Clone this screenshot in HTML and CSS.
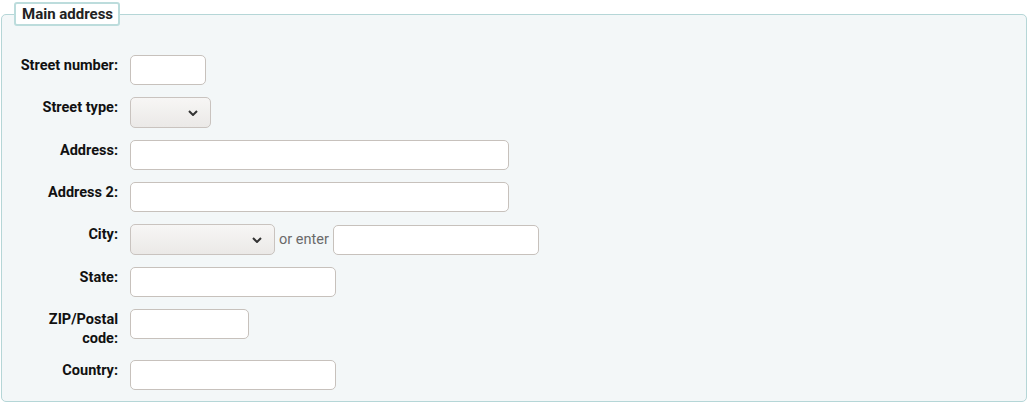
FILE: index.html
```html
<!DOCTYPE html>
<html lang="en">
<head>
<meta charset="utf-8">
<title>Main address</title>
<link rel="stylesheet" href="styles.css">
</head>
<body>
<fieldset class="panel">
  <legend class="panel-legend">Main address</legend>
  <ol class="form-list">
    <li class="form-row">
      <label class="form-label" for="streetnumber">Street number:</label>
      <input class="text-input w-xs" id="streetnumber" type="text">
    </li>
    <li class="form-row">
      <label class="form-label" for="streettype">Street type:</label>
      <span class="select-wrap w-sel-s">
        <select class="select-input" id="streettype"><option></option></select>
        <svg class="chevron" width="10" height="6" viewBox="0 0 10 6"><path d="M1 1l4 4 4-4" fill="none" stroke="#333" stroke-width="2"/></svg>
      </span>
    </li>
    <li class="form-row">
      <label class="form-label" for="address">Address:</label>
      <input class="text-input w-xl" id="address" type="text">
    </li>
    <li class="form-row">
      <label class="form-label" for="address2">Address 2:</label>
      <input class="text-input w-xl" id="address2" type="text">
    </li>
    <li class="form-row">
      <label class="form-label" for="city">City:</label>
      <div class="inline-group">
        <span class="select-wrap w-sel-m">
          <select class="select-input" id="city"><option></option></select>
          <svg class="chevron" width="10" height="6" viewBox="0 0 10 6"><path d="M1 1l4 4 4-4" fill="none" stroke="#333" stroke-width="2"/></svg>
        </span>
        <span class="hint">or enter</span>
        <input class="text-input w-m" type="text">
      </div>
    </li>
    <li class="form-row">
      <label class="form-label" for="state">State:</label>
      <input class="text-input w-m" id="state" type="text">
    </li>
    <li class="form-row">
      <label class="form-label" for="zip">ZIP/Postal code:</label>
      <input class="text-input w-s" id="zip" type="text">
    </li>
    <li class="form-row">
      <label class="form-label" for="country">Country:</label>
      <input class="text-input w-m" id="country" type="text">
    </li>
  </ol>
</fieldset>
</body>
</html>
```
FILE: styles.css
```css
html, body {
  margin: 0;
  padding: 0;
  background: #ffffff;
}
body {
  padding: 2px 1px 0 1px;
  font-family: Roboto, "Noto Sans", sans-serif;
  font-size: 14.5px;
  color: #111;
}
.panel {
  margin: 0;
  padding: 0;
  border: 1px solid #b5d6d7;
  border-radius: 5px;
  background: #f3f7f8;
  min-width: 0;
}
.panel-legend {
  margin-left: 12px;
  padding: 0 5px 0 6px;
  border: 2px solid #bcdcdc;
  border-radius: 3px;
  background: #ffffff;
  font-weight: bold;
  font-size: 15px;
  line-height: 20px;
  color: #222;
}
.form-list {
  list-style: none;
  margin: 0;
  padding: 29px 0 11px 16px;
  display: flex;
  flex-direction: column;
  gap: 12px;
}
.form-row {
  display: flex;
  align-items: flex-start;
  gap: 12px;
}
.form-label {
  width: 100px;
  flex: none;
  text-align: right;
  font-weight: bold;
  line-height: 19px;
  padding-top: 1px;
  color: #111;
}
.text-input {
  box-sizing: border-box;
  height: 30px;
  margin: 0;
  padding: 2px 6px;
  border: 1px solid #c7c1bc;
  border-radius: 5px;
  background: #ffffff;
  font: inherit;
}
.w-xs { width: 76px; }
.w-s { width: 119px; }
.w-m { width: 206px; }
.w-xl { width: 379px; }
.select-wrap {
  position: relative;
  display: inline-block;
  height: 31px;
}
.w-sel-s { width: 81px; }
.w-sel-m { width: 145px; }
.select-input {
  -webkit-appearance: none;
  appearance: none;
  box-sizing: border-box;
  width: 100%;
  height: 31px;
  margin: 0;
  padding: 2px 6px;
  border: 1px solid #c9c3bf;
  border-radius: 5px;
  background: linear-gradient(#f7f6f5, #ebe9e7);
  font: inherit;
}
.chevron {
  position: absolute;
  right: 13px;
  top: 13px;
  pointer-events: none;
}
.inline-group {
  display: flex;
  align-items: center;
  gap: 4px;
}
.hint {
  color: #6a6a6a;
  line-height: 19px;
}
```
